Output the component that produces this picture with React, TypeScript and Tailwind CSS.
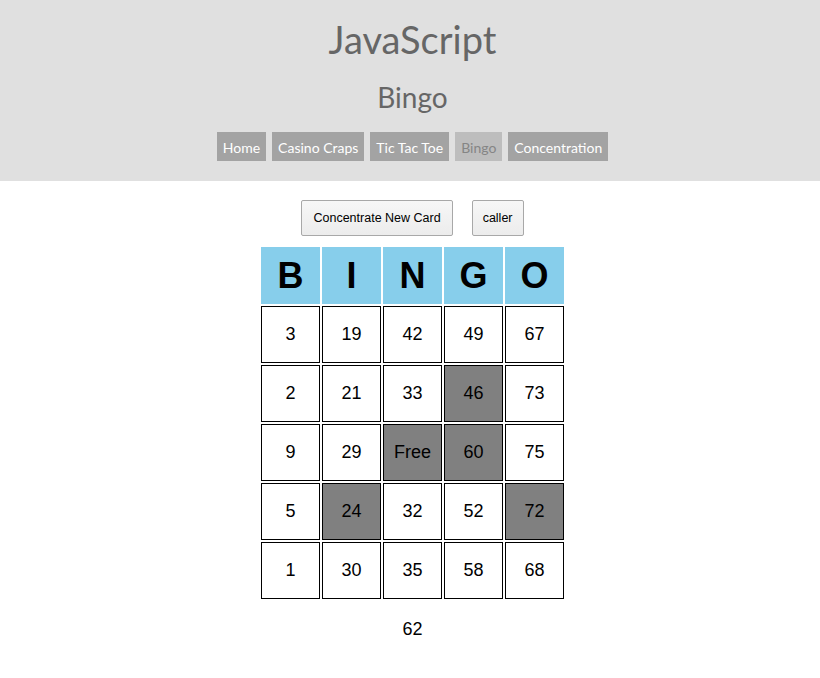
import React from "react";

const rows: (string | number)[][] = [
  [3, 19, 42, 49, 67],
  [2, 21, 33, 46, 73],
  [9, 29, "Free", 60, 75],
  [5, 24, 32, 52, 72],
  [1, 30, 35, 58, 68],
];
const marked = new Set(["1-3", "2-2", "2-3", "3-1", "3-4"]);

const nav = ["Home", "Casino Craps", "Tic Tac Toe", "Bingo", "Concentration"];

export default function App() {
  return (
    <div className="min-h-[678px] bg-white" style={{ fontFamily: "Lato, 'Noto Sans', sans-serif" }}>
      <div className="bg-[#e0e0e0] h-[181px] pl-[5px] pt-[16px] flex flex-col items-center">
        <h1 className="text-[38px] leading-[46px] text-[#666666] font-normal">JavaScript</h1>
        <h2 className="mt-[18px] text-[28px] leading-[34px] text-[#666666] font-normal">Bingo</h2>
        <div className="mt-[18px] flex gap-[6px]">
          {nav.map((n) => (
            <div
              key={n}
              className={
                n === "Bingo"
                  ? "h-[29px] px-[6px] pt-[1px] flex items-center text-[14px] bg-[#bdbdbd] text-[#858585]"
                  : "h-[29px] px-[6px] pt-[1px] flex items-center text-[14px] bg-[#a3a3a3] text-white"
              }
            >
              {n}
            </div>
          ))}
        </div>
      </div>
      <div className="pl-[5px] flex flex-col items-center" style={{ fontFamily: "'Liberation Sans', Arial, sans-serif" }}>
        <div className="mt-[19px] flex gap-[19px]">
          <button className="h-[36px] px-[11px] text-[12.5px] text-black border border-[#a8a8a8] rounded-[2px] bg-gradient-to-b from-[#f7f7f7] to-[#ececec]">
            Concentrate New Card
          </button>
          <button className="h-[36px] px-[10px] text-[12.5px] text-black border border-[#a8a8a8] rounded-[2px] bg-gradient-to-b from-[#f7f7f7] to-[#ececec]">
            caller
          </button>
        </div>
        <div className="mt-[11px] grid grid-cols-[repeat(5,59px)] gap-[2px]">
          {["B", "I", "N", "G", "O"].map((l) => (
            <div key={l} className="h-[57px] bg-[#87ceeb] flex items-center justify-center text-[36px] font-bold text-black">
              {l}
            </div>
          ))}
          {rows.map((r, i) =>
            r.map((v, j) => (
              <div
                key={`${i}-${j}`}
                className={
                  marked.has(`${i}-${j}`)
                    ? "h-[57px] border border-black bg-[#808080] flex items-center justify-center text-[18px] text-black"
                    : "h-[57px] border border-black bg-white flex items-center justify-center text-[18px] text-black"
                }
              >
                {v}
              </div>
            ))
          )}
        </div>
        <div className="mt-[20px] text-[18px] leading-[21px] text-black">62</div>
      </div>
    </div>
  );
}
